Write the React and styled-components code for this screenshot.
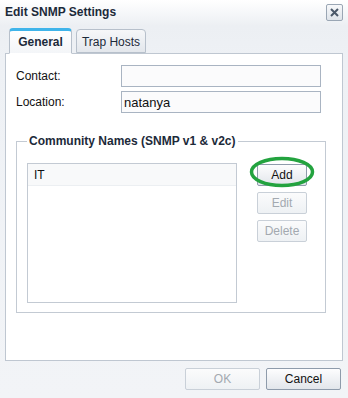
import React from 'react';
import styled, { createGlobalStyle } from 'styled-components';

const GlobalStyle = createGlobalStyle`
  html, body {
    margin: 0;
    padding: 0;
    background: #eef1f5;
  }
  body {
    font-family: 'Liberation Sans', Arial, sans-serif;
    font-size: 12px;
    color: #111;
  }
`;

const Window = styled.div`
  position: relative;
  width: 348px;
  height: 398px;
  box-sizing: border-box;
  display: flex;
  flex-direction: column;
  background: linear-gradient(#ffffff 0px, #eceff3 26px, #eef1f5 60px, #f2f4f7 100%);
`;

const TitleBar = styled.div`
  height: 24px;
  display: flex;
  align-items: center;
  justify-content: space-between;
  padding: 0 5px 0 5px;
`;

const Title = styled.span`
  font-weight: 700;
  font-size: 12px;
  color: #1c2a3a;
`;

const CloseButton = styled.div`
  width: 15px;
  height: 15px;
  border: 1px solid #9aa6b4;
  border-radius: 2px;
  background: linear-gradient(#f7f8fa, #dfe4ea);
  display: flex;
  align-items: center;
  justify-content: center;
  margin-top: 1px;
`;

const TabRow = styled.div`
  display: flex;
  align-items: flex-end;
  gap: 4px;
  padding-left: 9px;
  margin-top: 3px;
  height: 26px;
  position: relative;
  z-index: 1;
`;

const Tab = styled.div`
  box-sizing: border-box;
  width: ${p => (p.active ? '63px' : '70px')};
  height: ${p => (p.active ? '26px' : '24px')};
  display: flex;
  align-items: center;
  justify-content: center;
  white-space: nowrap;
  font-weight: ${p => (p.active ? 700 : 400)};
  color: #1c2a3a;
  border: 1px solid #b7c0cb;
  border-bottom: ${p => (p.active ? '1px solid #ffffff' : '1px solid #b7c0cb')};
  border-top: ${p => (p.active ? '3px solid #3fb4ea' : '1px solid #b7c0cb')};
  border-radius: 4px 4px 0 0;
  background: ${p => (p.active ? 'linear-gradient(#ffffff, #f3f5f8)' : 'linear-gradient(#f6f7f9, #e3e7ec)')};
  margin-bottom: ${p => (p.active ? '-1px' : '0')};
  padding-top: ${p => (p.active ? '0' : '1px')};
`;

const Panel = styled.div`
  margin: 0 5px;
  height: 308px;
  box-sizing: border-box;
  background: #ffffff;
  border: 1px solid #bfc7d1;
  padding: 11px 10px 0 10px;
  display: flex;
  flex-direction: column;
`;

const FieldRow = styled.div`
  display: flex;
  align-items: center;
  height: 22px;
  margin-bottom: 4px;
`;

const Label = styled.label`
  width: 105px;
  color: #111;
`;

const TextInput = styled.div`
  box-sizing: border-box;
  width: 200px;
  height: 22px;
  border: 1px solid #a9b4c2;
  background: #fbfbfc;
  display: flex;
  align-items: center;
  padding-left: 2px;
  font-size: 13px;
  color: #111;
`;

const Fieldset = styled.fieldset`
  margin: 17px 0 0 0;
  width: 310px;
  height: 179px;
  box-sizing: border-box;
  border: 1px solid #c3cad3;
  padding: 15px 18px 0 10px;
  display: flex;
  gap: 20px;
`;

const Legend = styled.legend`
  font-weight: 700;
  color: #1c2a3a;
  padding: 0 2px;
  margin-left: 0;
`;

const ListBox = styled.div`
  box-sizing: border-box;
  width: 210px;
  height: 140px;
  border: 1px solid #c3cad3;
  background: #fff;
`;

const ListItem = styled.div`
  height: 21px;
  display: flex;
  align-items: center;
  padding-left: 6px;
  background: #f8f9fa;
  border-bottom: 1px solid #eceff2;
  font-size: 12px;
  color: #111;
`;

const ButtonColumn = styled.div`
  display: flex;
  flex-direction: column;
  gap: 6px;
  padding-top: 1px;
  position: relative;
`;

const Button = styled.div`
  box-sizing: border-box;
  width: ${p => p.width || '50px'};
  height: 22px;
  border: 1px solid ${p => (p.disabled ? '#c9d0d8' : '#8e9bab')};
  border-radius: 2px;
  background: ${p => (p.disabled ? 'linear-gradient(#fbfbfc, #eef1f4)' : 'linear-gradient(#fdfdfe, #e2e6eb)')};
  color: ${p => (p.disabled ? '#a3a9b0' : '#111')};
  display: flex;
  align-items: center;
  justify-content: center;
  font-size: 12px;
`;

const Highlight = styled.svg`
  position: absolute;
  left: -8px;
  top: -7px;
  pointer-events: none;
`;

const Footer = styled.div`
  display: flex;
  justify-content: flex-end;
  gap: 6px;
  padding: 7px 7px 0 0;
`;

export default function App() {
  return (
    <>
      <GlobalStyle />
      <Window>
        <TitleBar>
          <Title>Edit SNMP Settings</Title>
          <CloseButton>
            <svg width="9" height="9" viewBox="0 0 9 9">
              <path d="M1 1 L8 8 M8 1 L1 8" stroke="#4a5869" strokeWidth="2" />
            </svg>
          </CloseButton>
        </TitleBar>
        <TabRow>
          <Tab active>General</Tab>
          <Tab>Trap Hosts</Tab>
        </TabRow>
        <Panel>
          <FieldRow>
            <Label>Contact:</Label>
            <TextInput />
          </FieldRow>
          <FieldRow>
            <Label>Location:</Label>
            <TextInput>natanya</TextInput>
          </FieldRow>
          <Fieldset>
            <Legend>Community Names (SNMP v1 &amp; v2c)</Legend>
            <ListBox>
              <ListItem>IT</ListItem>
            </ListBox>
            <ButtonColumn>
              <Button>Add</Button>
              <Button disabled>Edit</Button>
              <Button disabled>Delete</Button>
              <Highlight width="66" height="32" viewBox="0 0 66 32">
                <ellipse cx="33" cy="16" rx="30.5" ry="13.5" fill="none" stroke="#23a33f" strokeWidth="3.5" />
              </Highlight>
            </ButtonColumn>
          </Fieldset>
        </Panel>
        <Footer>
          <Button width="75px" disabled>OK</Button>
          <Button width="75px">Cancel</Button>
        </Footer>
      </Window>
    </>
  );
}
